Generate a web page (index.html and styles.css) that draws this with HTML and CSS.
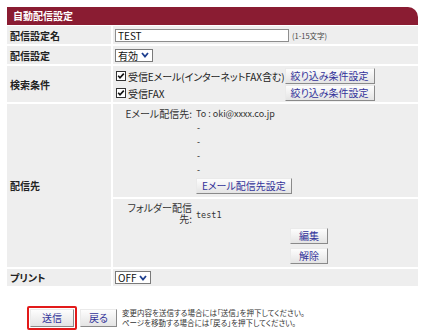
FILE: index.html
```html
<!DOCTYPE html>
<html lang="ja">
<head>
<meta charset="UTF-8">
<meta name="viewport" content="width=device-width, initial-scale=1.0">
<title>自動配信設定</title>
<link rel="stylesheet" href="styles.css">
</head>
<body>
<div class="page">
  <div class="panel-title">自動配信設定</div>

  <div class="form">
    <div class="label">配信設定名</div>
    <div class="value">
      <span class="textbox">TEST</span>
      <span class="hint">(1-15文字)</span>
    </div>

    <div class="label">配信設定</div>
    <div class="value">
      <span class="select">有効
        <svg class="chevron" width="8" height="6" viewBox="0 0 8 6"><polyline points="1,1 4,4.5 7,1" fill="none" stroke="#1f3f8f" stroke-width="1.8"/></svg>
      </span>
    </div>

    <div class="label">検索条件</div>
    <div class="value conditions">
      <span class="check">
        <svg class="box" width="10" height="10" viewBox="0 0 10 10"><rect x="0.5" y="0.5" width="9" height="9" fill="#fff" stroke="#333"/><polyline points="2.2,4.8 4,6.8 7.8,2.6" fill="none" stroke="#111" stroke-width="1.6"/></svg>
        受信Eメール(インターネットFAX含む)
      </span>
      <button class="btn">絞り込み条件設定</button>
      <span class="check">
        <svg class="box" width="10" height="10" viewBox="0 0 10 10"><rect x="0.5" y="0.5" width="9" height="9" fill="#fff" stroke="#333"/><polyline points="2.2,4.8 4,6.8 7.8,2.6" fill="none" stroke="#111" stroke-width="1.6"/></svg>
        受信FAX
      </span>
      <button class="btn">絞り込み条件設定</button>
    </div>

    <div class="label">配信先</div>
    <div class="dest">
      <div class="sub-row email-row">
        <div class="sub-label">Eメール配信先:</div>
        <div class="sub-value">
          <div class="line">To : oki@xxxx.co.jp</div>
          <div class="line dash">-</div>
          <div class="line dash">-</div>
          <div class="line dash">-</div>
          <div class="line dash">-</div>
          <button class="btn">Eメール配信先設定</button>
        </div>
      </div>
      <div class="sub-row folder-row">
        <div class="sub-label folder-label">フォルダー配信<br>先:</div>
        <div class="sub-value">
          <div class="mono">test1</div>
          <div class="folder-btns">
            <button class="btn small">編集</button>
            <button class="btn small">解除</button>
          </div>
        </div>
      </div>
    </div>

    <div class="label">プリント</div>
    <div class="value">
      <span class="select">OFF
        <svg class="chevron" width="8" height="6" viewBox="0 0 8 6"><polyline points="1,1 4,4.5 7,1" fill="none" stroke="#1f3f8f" stroke-width="1.8"/></svg>
      </span>
    </div>
  </div>

  <div class="actions">
    <span class="focus-ring"><button class="btn big">送信</button></span>
    <button class="btn back">戻る</button>
    <div class="notes">
      <div>変更内容を送信する場合には「送信」を押下してください。</div>
      <div>ページを移動する場合には「戻る」を押下してください。</div>
    </div>
  </div>
</div>
</body>
</html>
```

FILE: styles.css
```css
body {
  margin: 0;
  background: #fff;
  color: #333;
  font-family: "Noto Sans CJK JP", sans-serif;
  font-size: 10px;
  font-feature-settings: "palt";
}
.page {
  padding: 7px;
}
.panel-title {
  height: 18px;
  line-height: 18px;
  padding-left: 6px;
  margin-bottom: 1px;
  background: #8a1c32;
  color: #fff;
  font-weight: bold;
  border-top-right-radius: 10px;
}
.form {
  display: grid;
  grid-template-columns: 104px 1fr;
  grid-template-rows: 18px 18px 36px 163px 17px;
  gap: 2px;
}
.label {
  display: flex;
  align-items: center;
  padding-left: 3px;
  background: #eee;
  color: #222;
  font-weight: bold;
}
.value {
  display: flex;
  align-items: center;
  padding-left: 2px;
  background: #eee;
}
.textbox {
  width: 170px;
  height: 11px;
  line-height: 11px;
  padding-left: 2px;
  background: #fff;
  border: 1px solid #8e8e8e;
  color: #111;
}
.hint {
  margin-left: 3px;
  font-size: 7.5px;
  color: #444;
}
.select {
  display: inline-flex;
  align-items: center;
  gap: 3px;
  height: 11px;
  padding: 0 3px 0 2px;
  background: #fff;
  border: 1px solid #7a7a7a;
  color: #111;
}

.conditions {
  display: grid;
  grid-template-columns: auto auto;
  grid-auto-rows: 16px;
  justify-content: start;
  align-content: start;
  align-items: center;
  row-gap: 1px;
  column-gap: 0;
  padding-top: 2px;
}
.check {
  display: flex;
  align-items: center;
  gap: 2px;
  margin-left: 1px;
  color: #222;
  letter-spacing: -0.1px;
}
.btn {
  height: 16px;
  padding: 0 5px;
  font-family: inherit;
  font-size: 10px;
  font-feature-settings: "palt";
  line-height: 14px;
  color: #33339a;
  background: linear-gradient(#fdfdfd, #e4e4e4);
  border: 1px solid;
  border-color: #eaeaea #8a8a8a #8a8a8a #eaeaea;
  border-radius: 0;
  cursor: pointer;
}

.dest {
  display: flex;
  flex-direction: column;
  gap: 2px;
}
.sub-row {
  display: flex;
  gap: 3px;
  background: #eee;
}
.email-row {
  height: 93px;
}
.folder-row {
  height: 68px;
}
.sub-label {
  width: 79px;
  padding-right: 1px;
  padding-top: 3px;
  line-height: 14px;
  text-align: right;
  white-space: nowrap;
}
.folder-label {
  line-height: 11px;
}
.sub-value {
  padding-top: 3px;
  line-height: 14px;
}
.line {
  font-size: 9px;
}
.dash {
  font-family: "Liberation Sans", sans-serif;
  padding-left: 1px;
}
.sub-value .btn {
  margin-top: 1px;
}
.mono {
  padding-top: 7px;
  font-family: "DejaVu Sans Mono", monospace;
  font-size: 8.5px;
  line-height: 12px;
}
.folder-btns {
  display: flex;
  flex-direction: column;
  align-items: flex-start;
  gap: 3px;
  margin-top: 6px;
  padding-left: 94px;
}
.btn.small {
  padding: 0 8px;
}

.actions {
  display: flex;
  align-items: center;
  gap: 3px;
  margin-top: 20px;
  padding-left: 20px;
}
.focus-ring {
  display: inline-flex;
  padding: 1px;
  border: 2px solid #e21a1a;
  border-radius: 2px;
}
.btn.big {
  height: 18px;
  padding: 0 11px;
}
.btn.back {
  height: 18px;
  padding: 0 8px;
}
.notes {
  margin-left: 2px;
  font-size: 7.5px;
  line-height: 10px;
  color: #333;
}
```
